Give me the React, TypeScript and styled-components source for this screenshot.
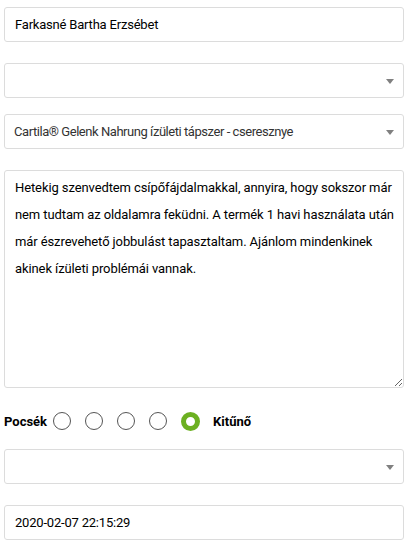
import { createGlobalStyle } from "styled-components";
import styled from "styled-components";

const GlobalStyle = createGlobalStyle`
  body {
    margin: 0;
    background: #fff;
    font-family: Roboto, "Liberation Sans", sans-serif;
  }
`;

const Form = styled.form`
  display: flex;
  flex-direction: column;
  padding: 7px 5px 0 4px;
`;

const Field = styled.div<{ $gap: number }>`
  margin-bottom: ${(p) => p.$gap}px;
`;

const TextInput = styled.input`
  box-sizing: border-box;
  display: block;
  width: 100%;
  height: 35px;
  padding: 0 10px;
  border: 1px solid #dcdcdc;
  border-radius: 3px;
  font-family: Roboto, "Liberation Sans", sans-serif;
  font-size: 13px;
  letter-spacing: -0.2px;
  color: #000;
  outline: none;
`;

const SelectBox = styled.div`
  position: relative;
  box-sizing: border-box;
  height: 35px;
  display: flex;
  align-items: center;
  padding: 0 30px 0 9px;
  border: 1px solid #dcdcdc;
  border-radius: 3px;
  font-size: 13px;
  letter-spacing: -0.45px;
  color: #333;

  &::after {
    content: "";
    position: absolute;
    right: 9px;
    top: 50%;
    margin-top: -2px;
    border-left: 4px solid transparent;
    border-right: 4px solid transparent;
    border-top: 5px solid #808080;
  }
`;

const Review = styled.textarea`
  box-sizing: border-box;
  display: block;
  width: 100%;
  height: 218px;
  padding: 3px 2px 3px 10px;
  border: 1px solid #dcdcdc;
  border-radius: 3px;
  font-family: Roboto, "Liberation Sans", sans-serif;
  font-size: 13px;
  letter-spacing: -0.1px;
  line-height: 27px;
  color: #000;
  resize: vertical;
  outline: none;
`;

const RatingRow = styled.div`
  display: flex;
  align-items: center;
  height: 20px;
  margin: 23px 0 18px;
`;

const RatingLabel = styled.span<{ $left?: number }>`
  font-size: 13px;
  font-weight: 700;
  color: #000;
  margin-left: ${(p) => p.$left ?? 0}px;
`;

const Radio = styled.span<{ $checked?: boolean; $first?: boolean }>`
  box-sizing: border-box;
  width: ${(p) => (p.$checked ? 19 : 18)}px;
  height: ${(p) => (p.$checked ? 19 : 18)}px;
  border-radius: 50%;
  border: ${(p) => (p.$checked ? "5px solid #6cb021" : "1px solid #555")};
  margin-left: ${(p) => (p.$first ? 6 : 14)}px;
  background: #fff;
`;

export default function App() {
  return (
    <>
      <GlobalStyle />
      <Form>
        <Field $gap={21}>
          <TextInput type="text" defaultValue="Farkasné Bartha Erzsébet" />
        </Field>
        <Field $gap={16}>
          <SelectBox />
        </Field>
        <Field $gap={21}>
          <SelectBox>Cartila® Gelenk Nahrung ízületi tápszer - cseresznye</SelectBox>
        </Field>
        <Review
          defaultValue="Hetekig szenvedtem csípőfájdalmakkal, annyira, hogy sokszor már nem tudtam az oldalamra feküdni. A termék 1 havi használata után már észrevehető jobbulást tapasztaltam. Ajánlom mindenkinek akinek ízületi problémái vannak."
        />
        <RatingRow>
          <RatingLabel>Pocsék</RatingLabel>
          <Radio $first />
          <Radio />
          <Radio />
          <Radio />
          <Radio $checked />
          <RatingLabel $left={13}>Kitűnő</RatingLabel>
        </RatingRow>
        <Field $gap={21}>
          <SelectBox />
        </Field>
        <Field $gap={0}>
          <TextInput type="text" defaultValue="2020-02-07 22:15:29" />
        </Field>
      </Form>
    </>
  );
}
